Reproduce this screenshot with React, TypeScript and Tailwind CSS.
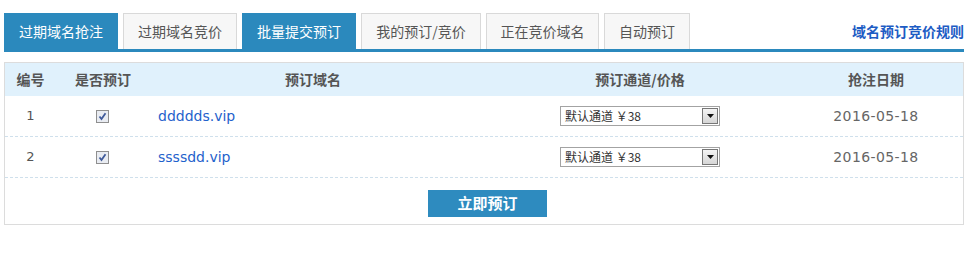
import { Fragment } from 'react';

type Row = {
    id: number;
    domain: string;
    date: string;
};

const rows: Row[] = [
    { id: 1, domain: 'ddddds.vip', date: '2016-05-18' },
    { id: 2, domain: 'ssssdd.vip', date: '2016-05-18' },
];

const tabs = [
    { label: '过期域名抢注', active: true, w: 'w-[114px]' },
    { label: '过期域名竞价', active: false, w: 'w-[114px]' },
    { label: '批量提交预订', active: true, w: 'w-[114px]' },
    { label: '我的预订/竞价', active: false, w: 'w-[120px]' },
    { label: '正在竞价域名', active: false, w: 'w-[113px]' },
    { label: '自动预订', active: false, w: 'w-[86px]' },
];

const cjk = "font-['Microsoft_YaHei','Noto_Sans_CJK_SC',sans-serif]";
const latin = "font-['Verdana','DejaVu_Sans','Noto_Sans_CJK_SC',sans-serif]";
const cols = 'grid grid-cols-[51px_94px_326px_328px_144px_1fr]';

const Checkbox = () => (
    <div className='w-[13px] h-[13px] border border-[#8f8f8f] bg-[#e9ecf2] flex items-center justify-center'>
        <svg width='9' height='9' viewBox='0 0 9 9'>
            <path d='M1.5 4.5 L3.5 7 L7.5 1.2' stroke='#3f5a9a' strokeWidth='1.8' fill='none' />
        </svg>
    </div>
);

const FakeSelect = () => (
    <div className="w-[160px] h-[20px] border border-[#a3a3a3] bg-white flex items-center justify-between font-['SimSun','Noto_Sans_CJK_SC',sans-serif] text-[12px] text-[#333]">
        <span className='pl-[4px] leading-none'>默认通道 ￥38</span>
        <div className='w-[16px] h-[16px] mr-[1px] border border-[#777] bg-gradient-to-b from-[#f4f4f4] to-[#d6d6d6] flex items-center justify-center'>
            <svg width='7' height='4' viewBox='0 0 7 4'>
                <path d='M0 0 L7 0 L3.5 4 Z' fill='#111' />
            </svg>
        </div>
    </div>
);

const App = () => {
    return (
        <div className={`w-[972px] h-[263px] bg-white pt-[13px] ${cjk}`}>
            <div className='ml-[4px] w-[960px]'>
                {/* tab bar */}
                <div className='flex flex-row items-end justify-between border-b-[3px] border-[#2b89bd]'>
                    <div className='flex flex-row gap-[5px]'>
                        {tabs.map((t) => (
                            <div
                                key={t.label}
                                className={
                                    t.active
                                        ? `${t.w} h-[36px] flex items-center justify-center bg-[#2b89bd] text-white text-[14px]`
                                        : `${t.w} h-[36px] flex items-center justify-center bg-[#f7f7f7] border border-b-0 border-[#d9d9d9] text-[#555] text-[14px]`
                                }
                            >
                                {t.label}
                            </div>
                        ))}
                    </div>
                    <a className='h-[36px] flex items-center text-[14px] font-bold text-[#1d5cc4] cursor-pointer'>
                        域名预订竞价规则
                    </a>
                </div>

                {/* table */}
                <div className='mt-[10px] border border-[#dcdcdc]'>
                    <div className={`${cols} h-[33px] items-center bg-[#e0f1fc] text-[14px] font-bold text-[#555]`}>
                        <div className='text-center'>编号</div>
                        <div className='text-center'>是否预订</div>
                        <div className='text-center'>预订域名</div>
                        <div className='text-center'>预订通道/价格</div>
                        <div className='text-center'>抢注日期</div>
                        <div />
                    </div>

                    {rows.map((r) => (
                        <Fragment key={r.id}>
                            <div className={`${cols} h-[41px] items-center border-b border-dashed border-[#cfe0ec]`}>
                                <div className={`text-center text-[13px] text-[#555] ${latin}`}>{r.id}</div>
                                <div className='flex justify-center pr-[2px]'>
                                    <Checkbox />
                                </div>
                                <div className={`pl-[8px] text-[14px] text-[#1f62cc] ${latin}`}>{r.domain}</div>
                                <div className='flex justify-center'>
                                    <FakeSelect />
                                </div>
                                <div className={`text-center text-[14px] tracking-[0.4px] text-[#666] ${latin}`}>{r.date}</div>
                                <div />
                            </div>
                        </Fragment>
                    ))}

                    <div className='flex justify-center pt-[12px] pb-[7px] pl-[7px]'>
                        <button className='w-[119px] h-[27px] bg-[#2e8bbf] text-white text-[15px] font-bold cursor-pointer'>
                            立即预订
                        </button>
                    </div>
                </div>
            </div>
        </div>
    );
};

export default App;
